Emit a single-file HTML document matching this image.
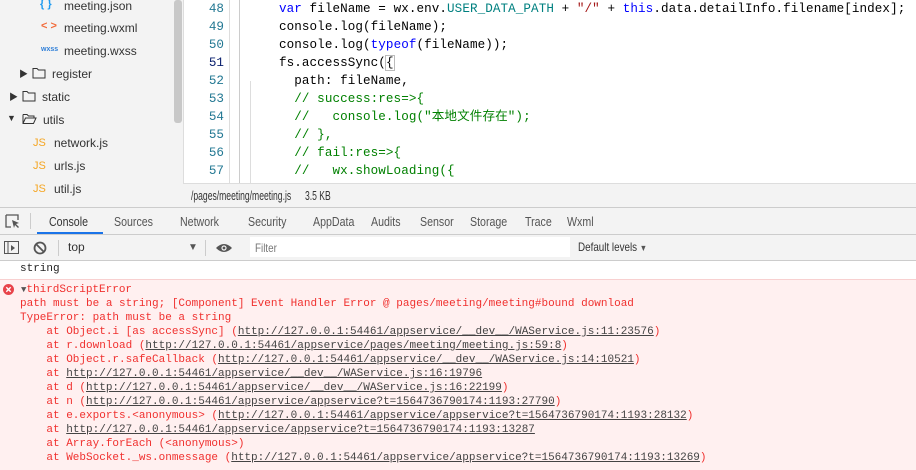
<!DOCTYPE html>
<html><head><meta charset="utf-8"><style>
*{margin:0;padding:0;box-sizing:border-box}
body{width:916px;height:470px;overflow:hidden;background:#fff;position:relative;font-family:"Liberation Sans","Noto Sans CJK SC",sans-serif}
.abs{position:absolute}
#side{left:0;top:0;width:183px;height:207px;background:#f3f3f3}
.row{position:absolute;font-size:12px;color:#333;white-space:nowrap;height:18px;line-height:18px}
.ic{position:absolute;font-size:11px;font-weight:bold}
#ed{left:183px;top:0;width:733px;height:183px;background:#fff;border-left:1px solid #ddd}
.ln{position:absolute;left:0;width:40px;text-align:right;font-family:"Liberation Mono",monospace;font-size:12.6px;color:#237893;line-height:18px;height:18px}
.cd{position:absolute;left:95px;font-family:"Liberation Mono","Noto Sans CJK SC",monospace;font-size:12.6px;letter-spacing:0.08px;color:#000;white-space:pre;line-height:18px;height:18px}
.kw{color:#0000ff}.cm{color:#008000}.cs{color:#a31515}.cv{color:#008080}
#status{left:183px;top:183px;width:733px;height:24px;background:#f3f3f3;border-top:1px solid #ddd;font-size:13px;color:#333;line-height:24px}
.nar{display:inline-block;transform:scaleX(0.82);transform-origin:left center;white-space:nowrap}
.nar2{display:inline-block;transform:scaleX(0.66);transform-origin:left center;white-space:nowrap}
#tabs{left:0;top:207px;width:916px;height:28px;background:#f3f3f3;border-top:1px solid #ccc;border-bottom:1px solid #ccc;font-size:12.5px;color:#555}
#tabs span{position:absolute;top:7px;transform:scaleX(0.85);transform-origin:left center;white-space:nowrap}
#bar{left:0;top:235px;width:916px;height:26px;background:#f3f3f3;border-bottom:1px solid #ccc;font-size:12px;color:#333}
.mono{font-family:"Liberation Mono",monospace;font-size:11px;white-space:pre}
#err{left:0;top:279px;width:916px;height:191px;background:#fff0f0;border-top:1px solid #f8d0d0}
.el{position:absolute;left:20px;color:#f0302e}
.el u{color:#444;text-decoration:underline}
</style></head><body>
<div id="side" class="abs">
 <span class="ic" style="left:40px;top:-2px;color:#1e9bf0">{ }</span><div class="row" style="left:64px;top:-3px">meeting.json</div>
 <span class="ic" style="left:41px;top:20px;color:#f26b3a">&lt; &gt;</span><div class="row" style="left:64px;top:19px">meeting.wxml</div>
 <span class="ic" style="left:41px;top:46px;color:#2f7fd8;font-size:7px">wxss</span><div class="row" style="left:64px;top:42px">meeting.wxss</div>
 <span class="ic" style="left:19px;top:67px;font-size:9px;color:#333">▶</span>
 <svg class="abs" style="left:32px;top:67px" width="14" height="12"><path d="M1 1.5h4l1.5 1.5H13v8H1z" fill="none" stroke="#333"/></svg>
 <div class="row" style="left:52px;top:65px">register</div>
 <span class="ic" style="left:9px;top:90px;font-size:9px;color:#333">▶</span>
 <svg class="abs" style="left:22px;top:90px" width="14" height="12"><path d="M1 1.5h4l1.5 1.5H13v8H1z" fill="none" stroke="#333"/></svg>
 <div class="row" style="left:42px;top:88px">static</div>
 <span class="ic" style="left:7px;top:113px;font-size:9px;color:#333">▼</span>
 <svg class="abs" style="left:22px;top:113px" width="15" height="12"><path d="M1 1.5h4l1.5 1.5H12v2M1 1.5v9h10.5l2.5-5.5H3.5L1 10.5" fill="none" stroke="#333"/></svg>
 <div class="row" style="left:43px;top:111px">utils</div>
 <span class="ic" style="left:33px;top:137px;color:#f5a623;font-weight:normal">JS</span><div class="row" style="left:54px;top:134px">network.js</div>
 <span class="ic" style="left:33px;top:160px;color:#f5a623;font-weight:normal">JS</span><div class="row" style="left:54px;top:157px">urls.js</div>
 <span class="ic" style="left:33px;top:183px;color:#f5a623;font-weight:normal">JS</span><div class="row" style="left:54px;top:180px">util.js</div>
 <div class="abs" style="left:174px;top:0;width:8px;height:123px;background:#c8c8c8;border-radius:3px"></div>
</div>
<div id="ed" class="abs">
 <div class="abs" style="left:45px;top:0;width:1px;height:183px;background:#ddd"></div>
 <div class="abs" style="left:55px;top:0;width:1px;height:183px;background:#ccc"></div>
 <div class="abs" style="left:66px;top:81px;width:1px;height:102px;background:#ddd"></div>
 <div class="ln" style="top:0px">48</div><div class="cd" style="top:0px"><span class="kw">var</span> fileName = wx.env.<span class="cv">USER_DATA_PATH</span> + <span class="cs">"/"</span> + <span class="kw">this</span>.data.detailInfo.filename[index];</div>
 <div class="ln" style="top:18px">49</div><div class="cd" style="top:18px">console.log(fileName);</div>
 <div class="ln" style="top:36px">50</div><div class="cd" style="top:36px">console.log(<span class="kw">typeof</span>(fileName));</div>
 <div class="ln" style="top:54px;color:#0b216f">51</div><div class="cd" style="top:54px">fs.accessSync(<span style="outline:1px solid #bbb">{</span></div>
 <div class="ln" style="top:72px">52</div><div class="cd" style="top:72px">  path: fileName,</div>
 <div class="ln" style="top:90px">53</div><div class="cd cm" style="top:90px">  // success:res=>{</div>
 <div class="ln" style="top:108px">54</div><div class="cd cm" style="top:108px">  //   console.log("本地文件存在");</div>
 <div class="ln" style="top:126px">55</div><div class="cd cm" style="top:126px">  // },</div>
 <div class="ln" style="top:144px">56</div><div class="cd cm" style="top:144px">  // fail:res=>{</div>
 <div class="ln" style="top:162px">57</div><div class="cd cm" style="top:162px">  //   wx.showLoading({</div>
</div>
<div id="status" class="abs"><span class="abs nar2" style="left:8px">/pages/meeting/meeting.js</span><span class="abs nar2" style="left:122px">3.5 KB</span></div>
<div id="tabs" class="abs">
 <svg class="abs" style="left:5px;top:6px" width="16" height="16"><path d="M1 1h12v5M1 1v12h5" fill="none" stroke="#555" stroke-width="1.3"/><path d="M7 6l7 3-3 1 3 3-1 1-3-3-1 3z" fill="#555"/></svg>
 <div class="abs" style="left:30px;top:5px;width:1px;height:16px;background:#ccc"></div>
 <span style="left:49px;color:#333">Console</span>
 <div class="abs" style="left:37px;top:24px;width:66px;height:2px;background:#1a73e8"></div>
 <span style="left:114px">Sources</span><span style="left:180px">Network</span><span style="left:248px">Security</span>
 <span style="left:313px">AppData</span><span style="left:371px">Audits</span><span style="left:420px">Sensor</span>
 <span style="left:470px">Storage</span><span style="left:525px">Trace</span><span style="left:567px">Wxml</span>
</div>
<div id="bar" class="abs">
 <svg class="abs" style="left:4px;top:6px" width="16" height="14"><rect x="0.5" y="0.5" width="14" height="12" fill="none" stroke="#555"/><path d="M4 1v11" stroke="#555"/><path d="M7 4l4 3-4 3z" fill="#555"/></svg>
 <svg class="abs" style="left:33px;top:6px" width="14" height="14"><circle cx="7" cy="7" r="5.5" fill="none" stroke="#555" stroke-width="1.8"/><path d="M3 3l8 8" stroke="#555" stroke-width="1.8"/></svg>
 <div class="abs" style="left:58px;top:5px;width:1px;height:16px;background:#ccc"></div>
 <span class="abs" style="left:68px;top:5px">top</span>
 <span class="abs" style="left:188px;top:7px;font-size:10px;color:#555">▼</span>
 <div class="abs" style="left:205px;top:5px;width:1px;height:16px;background:#ccc"></div>
 <svg class="abs" style="left:215px;top:7px" width="18" height="12"><path d="M1 6Q9-2 17 6Q9 14 1 6z" fill="#555"/><circle cx="9" cy="6" r="2.6" fill="#f3f3f3"/><circle cx="9" cy="6" r="1.4" fill="#555"/></svg>
 <div class="abs" style="left:250px;top:2px;width:320px;height:20px;background:#fff"></div>
 <span class="abs nar" style="left:255px;top:6px;color:#777">Filter</span>
 <span class="abs nar" style="left:578px;top:5px;color:#333">Default levels <span style="font-size:9px;color:#555">▼</span></span>
</div>
<div class="abs mono" style="left:20px;top:263px;color:#222">string</div>
<div id="err" class="abs">
 <svg class="abs" style="left:3px;top:4px" width="11" height="11"><circle cx="5.5" cy="5.5" r="5.5" fill="#e8434a"/><path d="M3.3 3.3l4.4 4.4M7.7 3.3l-4.4 4.4" stroke="#fff" stroke-width="1.4"/></svg>
 <div class="el mono" style="top:4px;left:21px"><span style="color:#555;font-size:9px">▼</span>thirdScriptError</div>
 <div class="el mono" style="top:18px">path must be a string; [Component] Event Handler Error @ pages/meeting/meeting#bound download</div>
 <div class="el mono" style="top:32px">TypeError: path must be a string</div>
 <div class="el mono" style="top:46px">    at Object.i [as accessSync] (<u>http://127.0.0.1:54461/appservice/__dev__/WAService.js:11:23576</u>)</div>
 <div class="el mono" style="top:60px">    at r.download (<u>http://127.0.0.1:54461/appservice/pages/meeting/meeting.js:59:8</u>)</div>
 <div class="el mono" style="top:74px">    at Object.r.safeCallback (<u>http://127.0.0.1:54461/appservice/__dev__/WAService.js:14:10521</u>)</div>
 <div class="el mono" style="top:88px">    at <u>http://127.0.0.1:54461/appservice/__dev__/WAService.js:16:19796</u></div>
 <div class="el mono" style="top:102px">    at d (<u>http://127.0.0.1:54461/appservice/__dev__/WAService.js:16:22199</u>)</div>
 <div class="el mono" style="top:116px">    at n (<u>http://127.0.0.1:54461/appservice/appservice?t=1564736790174:1193:27790</u>)</div>
 <div class="el mono" style="top:130px">    at e.exports.&lt;anonymous&gt; (<u>http://127.0.0.1:54461/appservice/appservice?t=1564736790174:1193:28132</u>)</div>
 <div class="el mono" style="top:144px">    at <u>http://127.0.0.1:54461/appservice/appservice?t=1564736790174:1193:13287</u></div>
 <div class="el mono" style="top:158px">    at Array.forEach (&lt;anonymous&gt;)</div>
 <div class="el mono" style="top:172px">    at WebSocket._ws.onmessage (<u>http://127.0.0.1:54461/appservice/appservice?t=1564736790174:1193:13269</u>)</div>
</div>
</body></html>
